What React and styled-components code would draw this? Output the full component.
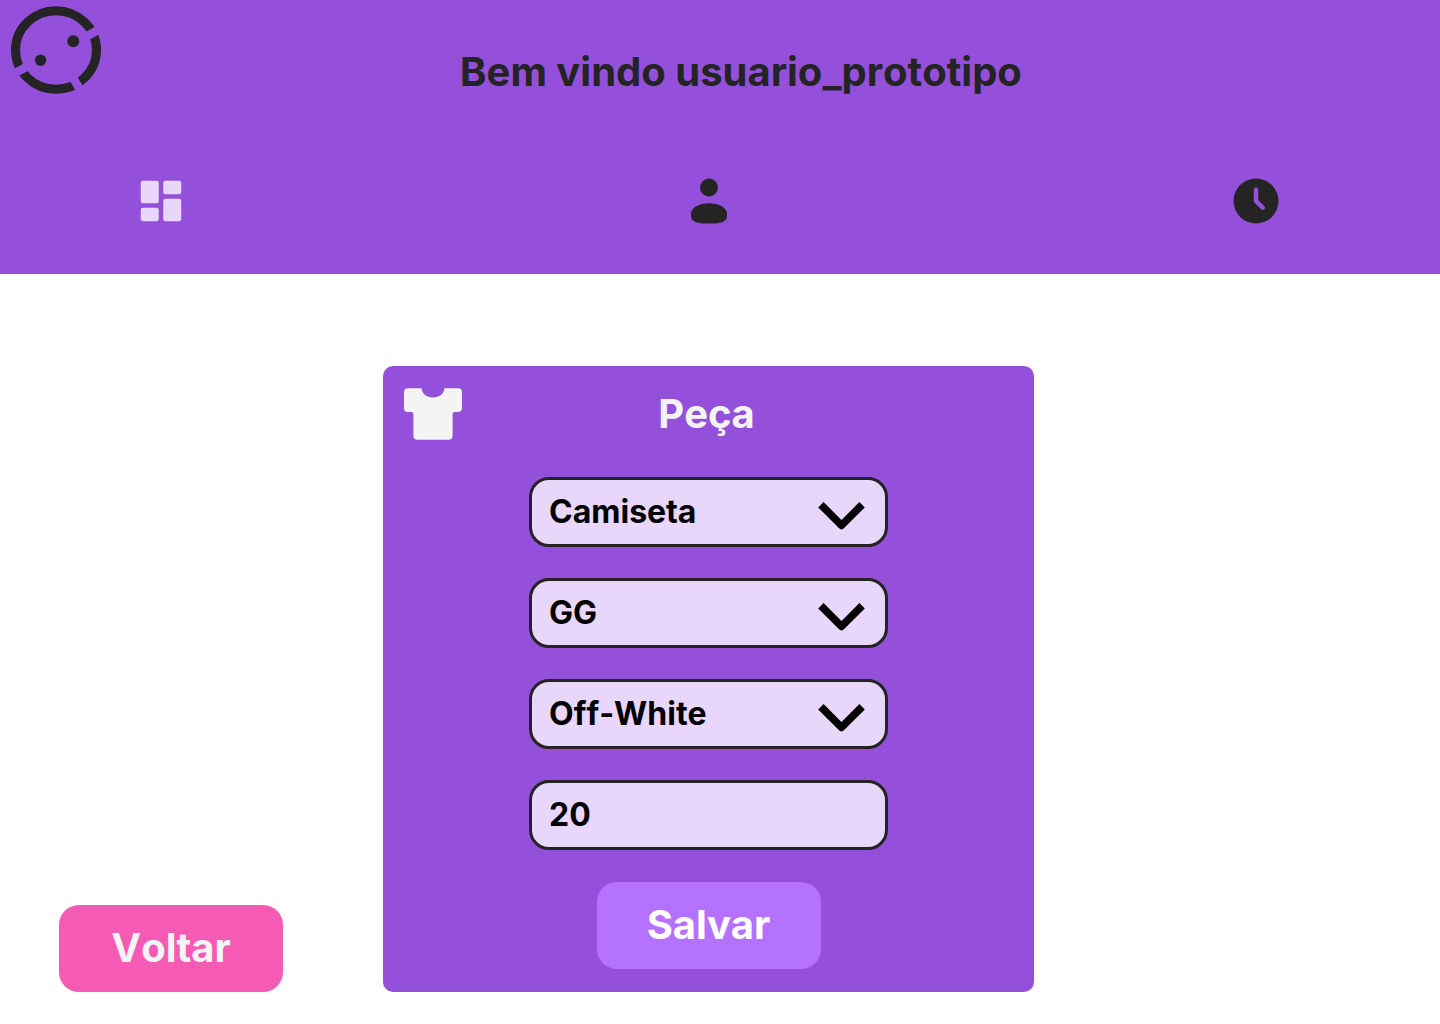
import React from "react";
import styled, { createGlobalStyle } from "styled-components";

const color = {
  purple: "#9450da",
  lilac: "#e8d6fb",
  violet: "#b571ff",
  pink: "#f55ab5",
  ink: "#242424",
  light: "#f4f4f4",
};

const GlobalStyle = createGlobalStyle`
  * { box-sizing: border-box; font-kerning: none; }
  body {
    margin: 0;
    background: #ffffff;
    font-family: Inter, "Liberation Sans", sans-serif;
  }
  svg { display: block; }
`;

const Header = styled.header`
  background: ${color.purple};
  padding-bottom: 46px;
`;

const Brand = styled.div`
  display: flex;
  align-items: flex-start;
`;

const LogoLink = styled.a`
  flex: none;
`;

const Title = styled.h1`
  flex: 1;
  margin: 0;
  padding: 48px 70px 0 0;
  color: ${color.ink};
  font-size: 40px;
  line-height: 48px;
  font-weight: 700;
  text-align: center;
`;

const Nav = styled.nav`
  display: flex;
  justify-content: space-between;
  padding: 74px 157px 0 134px;
`;

const NavLink = styled.a`
  color: ${(p) => (p.$active ? color.lilac : color.ink)};
`;

const Main = styled.main`
  display: grid;
  grid-template-columns: minmax(224px, 1fr) minmax(400px, 651px) minmax(0, 1fr);
  align-items: end;
  padding: 92px 82px 32px 59px;
`;

const Button = styled.button`
  width: 224px;
  height: 87px;
  padding: 0 0 2px;
  border: 0;
  border-radius: 20px;
  background: ${(p) => (p.$back ? color.pink : color.violet)};
  color: ${(p) => (p.$back ? color.light : "#ffffff")};
  font-family: inherit;
  font-size: 40px;
  line-height: 48px;
  font-weight: 700;
  cursor: pointer;
`;

const Card = styled.form`
  display: flex;
  flex-direction: column;
  align-items: center;
  padding: 22px 21px 23px;
  border-radius: 10px;
  background: ${color.purple};
`;

const CardHeader = styled.div`
  display: grid;
  grid-template-columns: 58px 1fr 62px;
  align-items: center;
  width: 100%;
  margin-bottom: 37px;
`;

const CardTitle = styled.h2`
  margin: 0;
  color: ${color.light};
  font-size: 40px;
  line-height: 52px;
  font-weight: 700;
  text-align: center;
`;

const Fields = styled.div`
  display: grid;
  gap: 31px;
  width: 100%;
  max-width: 359px;
  margin-bottom: 32px;
`;

const Field = styled.div`
  position: relative;
`;

const Control = styled.input`
  display: block;
  width: 100%;
  height: 70px;
  margin: 0;
  padding: 0 17px 2px;
  border: 3px solid ${color.ink};
  border-radius: 20px;
  background: ${color.lilac};
  color: #000000;
  font-family: inherit;
  font-size: 32px;
  font-weight: 700;
  appearance: none;
`;

const Chevron = styled.svg`
  position: absolute;
  top: 25px;
  right: 23px;
  pointer-events: none;
`;

function Logo() {
  return (
    <svg width="112" height="100" viewBox="0 0 112 100" fill="none">
      <ellipse cx="56" cy="50" rx="40.5" ry="39.3" stroke={color.ink} strokeWidth="9" />
      <g stroke={color.purple} strokeWidth="8.6">
        <path d="M104 27L84 37.6" />
        <path d="M10 75.7L30 65" />
        <path d="M71 74.4L83 94.6" />
      </g>
      <circle cx="73.3" cy="41.2" r="6" fill={color.ink} />
      <circle cx="40.6" cy="60.2" r="5.7" fill={color.ink} />
    </svg>
  );
}

function NavIcon({ children }) {
  return (
    <svg width="54" height="54" viewBox="0 0 24 24" fill="currentColor">
      {children}
    </svg>
  );
}

function Shirt() {
  return (
    <svg width="58" height="52" viewBox="0 0 58 52" fill={color.light}>
      <path d="M4 0.3H17.5C18.2 6 22.5 9.4 29 9.4S39.8 6 40.5 0.3H54A4 4 0 0 1 58 4.3V20A4 4 0 0 1 54 24H50.5Q48.6 24 48.6 26V47.7A4 4 0 0 1 44.6 51.7H13.4A4 4 0 0 1 9.4 47.7V26Q9.4 24 7.5 24H4A4 4 0 0 1 0 20V4.3A4 4 0 0 1 4 0.3Z" />
    </svg>
  );
}

function SelectField({ label, options }) {
  return (
    <Field>
      <Control as="select" aria-label={label} defaultValue={options[0]}>
        {options.map((option) => (
          <option key={option}>{option}</option>
        ))}
      </Control>
      <Chevron width="47" height="28" viewBox="0 0 47 28" fill="none">
        <path d="M2.9 2.7L23.5 23.4L44.1 2.7" stroke="#000000" strokeWidth="7.6" strokeLinejoin="round" />
      </Chevron>
    </Field>
  );
}

export default function App() {
  return (
    <>
      <GlobalStyle />
      <Header>
        <Brand>
          <LogoLink href="#inicio" aria-label="Início">
            <Logo />
          </LogoLink>
          <Title>Bem vindo usuario_prototipo</Title>
        </Brand>
        <Nav>
          <NavLink href="#painel" aria-label="Painel" $active>
            <NavIcon>
              <rect x="3" y="3" width="8" height="10" rx="1" />
              <rect x="3" y="15" width="8" height="6" rx="1" />
              <rect x="13" y="3" width="8" height="6" rx="1" />
              <rect x="13" y="11" width="8" height="10" rx="1" />
            </NavIcon>
          </NavLink>
          <NavLink href="#perfil" aria-label="Perfil">
            <NavIcon>
              <circle cx="12" cy="6" r="4" />
              <path d="M20 17.5C20 19.985 20 22 12 22S4 19.985 4 17.5S7.582 13 12 13S20 15.015 20 17.5Z" />
            </NavIcon>
          </NavLink>
          <NavLink href="#historico" aria-label="Histórico">
            <NavIcon>
              <circle cx="12" cy="12" r="10" />
              <path d="M12 7V12L15 15" fill="none" stroke={color.purple} strokeWidth="2" strokeLinecap="round" strokeLinejoin="round" />
            </NavIcon>
          </NavLink>
        </Nav>
      </Header>
      <Main>
        <Button type="button" $back>Voltar</Button>
        <Card onSubmit={(event) => event.preventDefault()}>
          <CardHeader>
            <Shirt />
            <CardTitle>Peça</CardTitle>
          </CardHeader>
          <Fields>
            <SelectField label="Tipo" options={["Camiseta", "Calça", "Bermuda"]} />
            <SelectField label="Tamanho" options={["GG", "G", "M", "P"]} />
            <SelectField label="Cor" options={["Off-White", "Preto", "Azul"]} />
            <Control type="text" inputMode="numeric" aria-label="Quantidade" defaultValue="20" />
          </Fields>
          <Button type="submit">Salvar</Button>
        </Card>
      </Main>
    </>
  );
}
